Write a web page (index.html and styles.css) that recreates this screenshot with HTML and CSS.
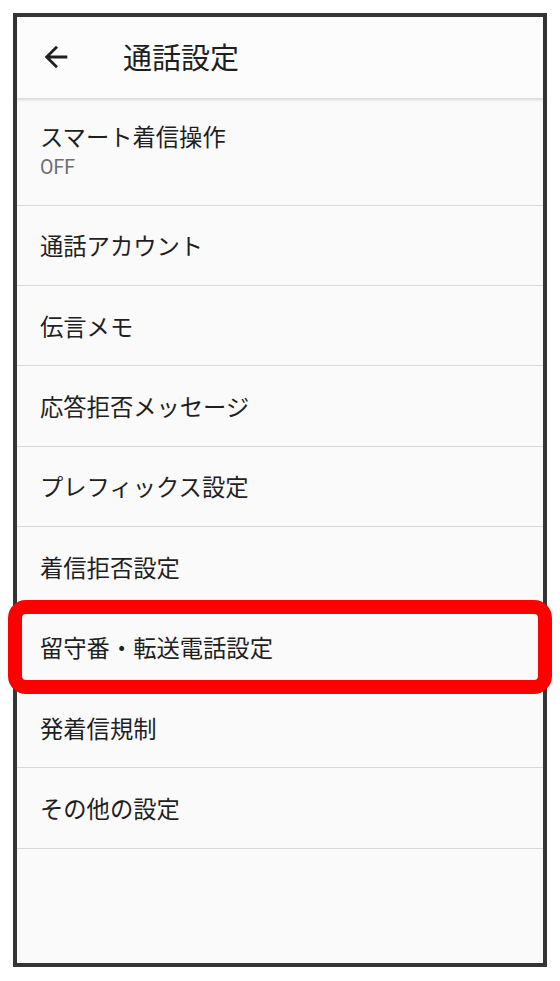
FILE: index.html
```html
<!DOCTYPE html>
<html lang="ja">
<head>
    <meta charset="UTF-8">
    <meta name="viewport" content="width=device-width, initial-scale=1.0">
    <title>通話設定</title>
    <link rel="stylesheet" href="styles.css">
</head>
<body>
    <div class="phone">
        <div class="app-bar">
            <svg class="back-icon" viewBox="0 0 24 24" width="34" height="34">
                <path d="M20 11H7.83l5.59-5.59L12 4l-8 8 8 8 1.41-1.41L7.83 13H20v-2z" fill="#1f1f1f"/>
            </svg>
            <h1 class="title">通話設定</h1>
        </div>

        <ul class="settings">
            <li class="item two-line">
                <span class="label">スマート着信操作</span>
                <span class="summary">OFF</span>
            </li>
            <li class="item"><span class="label">通話アカウント</span></li>
            <li class="item"><span class="label">伝言メモ</span></li>
            <li class="item"><span class="label">応答拒否メッセージ</span></li>
            <li class="item"><span class="label">プレフィックス設定</span></li>
            <li class="item"><span class="label">着信拒否設定</span></li>
            <li class="item highlight"><span class="label">留守番・転送電話設定</span></li>
            <li class="item"><span class="label">発着信規制</span></li>
            <li class="item"><span class="label">その他の設定</span></li>
        </ul>
    </div>
</body>
</html>
```

FILE: styles.css
```css
body {
    margin: 0;
    background: #ffffff;
    font-family: "Noto Sans CJK JP", "Noto Sans", sans-serif;
    color: #1f1f1f;
}
.phone {
    box-sizing: border-box;
    width: 534px;
    height: 954px;
    margin: 13px 0 0 13px;
    border: 4px solid #353535;
    background: #fafafa;
    display: flex;
    flex-direction: column;
}
.app-bar {
    position: relative;
    z-index: 1;
    flex: 0 0 81px;
    display: flex;
    align-items: center;
    background: #fcfcfc;
    box-shadow: 0 2px 3px rgba(0, 0, 0, 0.14);
    padding-left: 22px;
}
.back-icon {
    display: block;
    margin-top: -2px;
}
.title {
    margin: -2px 0 0 50px;
    font-size: 29px;
    font-weight: normal;
    line-height: 1;
}
.settings {
    list-style: none;
    margin: 0;
    padding: 0;
}
.item {
    box-sizing: border-box;
    height: 80.4px;
    border-bottom: 1px solid #d9d9d9;
    display: flex;
    flex-direction: column;
    justify-content: center;
    padding-left: 23px;
}
.item.two-line {
    height: 107.5px;
    padding-bottom: 2px;
}
.label {
    font-size: 23.3px;
    line-height: 30px;
}
.summary {
    font-family: Roboto, "Liberation Sans", sans-serif;
    font-size: 19.5px;
    line-height: 24px;
    color: #6e6e6e;
    margin-top: 5px;
}
.highlight {
    position: relative;
}
.highlight::after {
    content: "";
    position: absolute;
    top: -7px;
    bottom: -7px;
    left: -9px;
    right: -9px;
    border: 14.5px solid #ff0000;
    border-radius: 18px;
}
```
